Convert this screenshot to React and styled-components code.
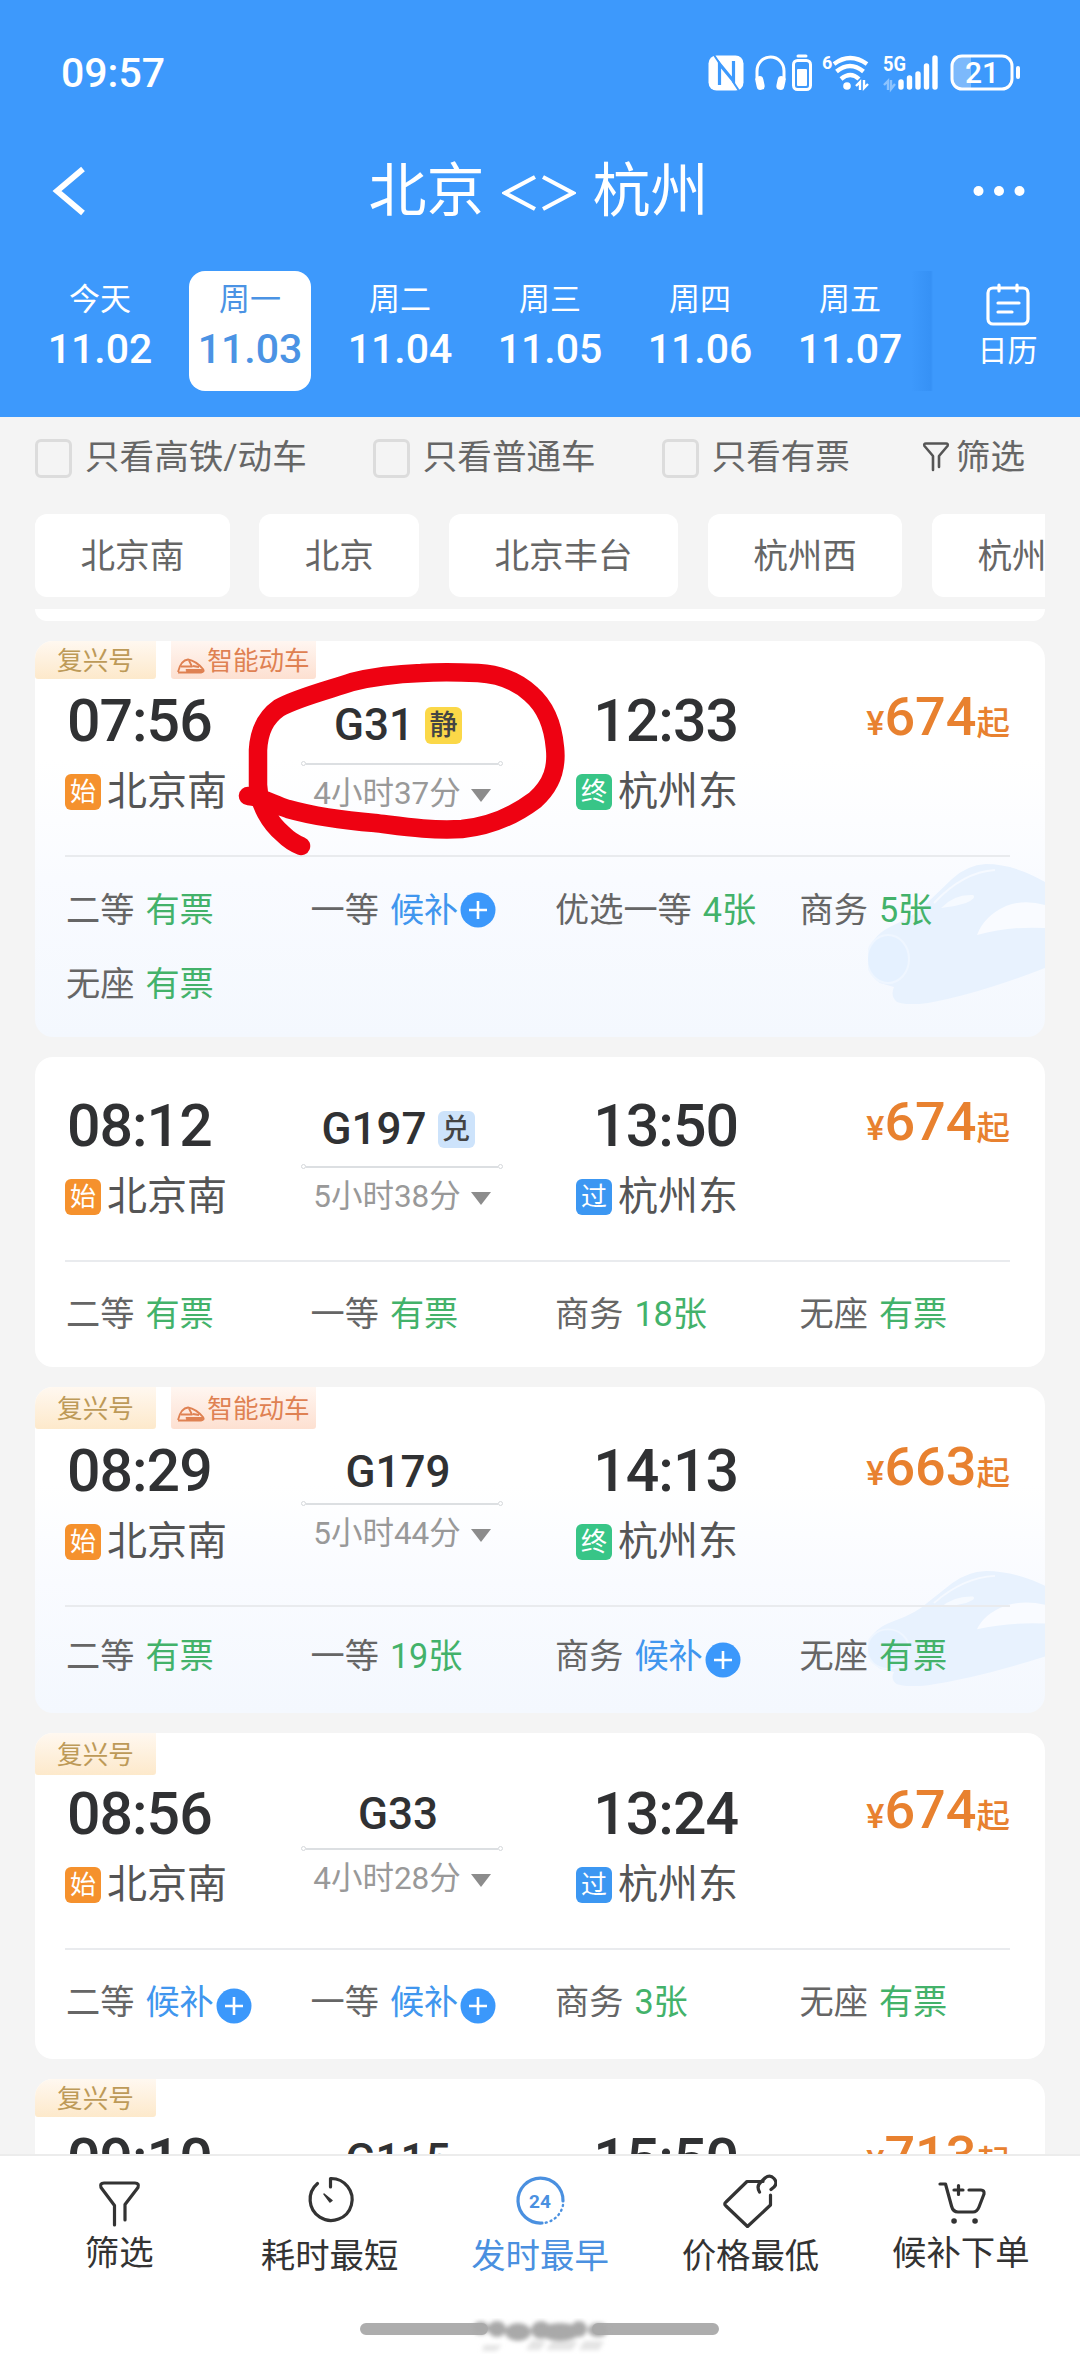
import { useState } from 'react'
import styled, { createGlobalStyle } from 'styled-components'

const days = [
   { week: '今天', date: '11.02' },
   { week: '周一', date: '11.03' },
   { week: '周二', date: '11.04' },
   { week: '周三', date: '11.05' },
   { week: '周四', date: '11.06' },
   { week: '周五', date: '11.07' },
]

const filters = ['只看高铁/动车', '只看普通车', '只看有票']

const stations = ['北京南', '北京', '北京丰台', '杭州西', '杭州东']

const tagColors = {
   始: '#f5912d',
   终: '#38c587',
   过: '#3c97f2',
}

const trains = [
   {
      no: 'G31',
      mark: { text: '静', color: '#fbd848' },
      fuxing: true,
      smart: true,
      circled: true,
      start: '07:56',
      end: '12:33',
      endTag: '终',
      duration: '4小时37分',
      price: '674',
      seats: [
         ['二等', '有票'],
         ['一等', '候补'],
         ['优选一等', '4张'],
         ['商务', '5张'],
         ['无座', '有票'],
      ],
      layout: { height: 396, top: 50, badge: 38, midTop: 12, midGap: 16, seats: 33, art: [140, 33] },
   },
   {
      no: 'G197',
      mark: { text: '兑', color: '#cde3fb' },
      start: '08:12',
      end: '13:50',
      endTag: '过',
      duration: '5小时38分',
      price: '674',
      seats: [
         ['二等', '有票'],
         ['一等', '有票'],
         ['商务', '18张'],
         ['无座', '有票'],
      ],
      layout: { height: 310, top: 39, midTop: 11, midGap: 15, seats: 32 },
   },
   {
      no: 'G179',
      fuxing: true,
      smart: true,
      start: '08:29',
      end: '14:13',
      endTag: '终',
      duration: '5小时44分',
      price: '663',
      seats: [
         ['二等', '有票'],
         ['一等', '19张'],
         ['商务', '候补'],
         ['无座', '有票'],
      ],
      layout: { height: 326, top: 54, badge: 42, midTop: 9, midGap: 9, seats: 29, plusDrop: 4, art: [115, 27] },
   },
   {
      no: 'G33',
      fuxing: true,
      start: '08:56',
      end: '13:24',
      endTag: '过',
      duration: '4小时28分',
      price: '674',
      seats: [
         ['二等', '候补'],
         ['一等', '候补'],
         ['商务', '3张'],
         ['无座', '有票'],
      ],
      layout: { height: 326, top: 51, badge: 42, midTop: 8, midGap: 12, seats: 32, plusDrop: 4 },
   },
   {
      no: 'G115',
      fuxing: true,
      start: '09:10',
      end: '15:50',
      price: '713',
      seats: [],
      layout: { height: 326, top: 51, badge: 38, midTop: 8, midGap: 12, seats: 32 },
   },
]

const StatusIcons = () => (
   <StatusRight>
      <svg width="36" height="38" viewBox="0 0 36 38" fill="none">
         <rect x="0.5" y="1.5" width="35" height="35" rx="8" fill="#fff" />
         <path d="M11.500 31V10l14 17V7" stroke="#3d99fc" strokeWidth="3.2" />
         <path d="M6 1l6 9M24.500 27l6 9" stroke="#3d99fc" strokeWidth="2" />
      </svg>
      <svg width="58" height="38" viewBox="0 0 58 38" fill="none">
         <path d="M3 26V17C3 9 9 3 16.500 3S30 9 30 17v9" stroke="#fff" strokeWidth="3" />
         <rect x="2" y="22" width="8" height="14" rx="4" fill="#fff" transform="rotate(-12 6 29)" />
         <rect x="23" y="22" width="8" height="14" rx="4" fill="#fff" transform="rotate(12 27 29)" />
         <rect x="39.500" y="6.500" width="17" height="29" rx="4" stroke="#fff" strokeWidth="3" />
         <path d="M44 2h8" stroke="#fff" strokeWidth="3" strokeLinecap="round" />
         <rect x="43" y="15" width="10" height="17" rx="1" fill="#fff" />
      </svg>
      <svg width="50" height="40" viewBox="0 0 50 40" fill="none" overflow="visible">
         <text x="0" y="16" fontSize="18" fontWeight="700" fill="#fff">6</text>
         <g stroke="#fff" strokeWidth="4.400">
            <path d="M12 11q16-12 33 0" />
            <path d="M14.500 18.500q13.500-11 27 0" />
            <path d="M19 26q9.500-8 18 0" />
         </g>
         <circle cx="25" cy="33" r="3.800" fill="#fff" />
         <path d="M34 33l4-4v8M46 31l-4 4v-8" stroke="#fff" strokeWidth="2.400" />
      </svg>
      <svg width="58" height="40" viewBox="0 0 58 40" fill="none" overflow="visible">
         <text x="1" y="18" fontSize="20" fontWeight="700" fill="#fff" textLength="23" lengthAdjust="spacingAndGlyphs">5G</text>
         <g stroke="#fff" strokeWidth="5.400" strokeLinecap="round">
            <path d="M19 34v-5M27.500 34v-9M36 34V21M44.500 34V13M53 34V5" />
         </g>
         <path d="M2 32l4-4v9M13 31l-4 5v-9" stroke="#8cc3fe" strokeWidth="2.400" />
      </svg>
      <svg width="72" height="38" viewBox="0 0 72 38" fill="none">
         <path d="M10 3h11v32H10q-7-1-7-8V11q0-7 7-8z" fill="#7cb9fb" />
         <rect x="2" y="2" width="60" height="33" rx="10" stroke="#fff" strokeWidth="3" />
         <path d="M68 14v9" stroke="#fff" strokeWidth="4" strokeLinecap="round" />
         <text x="32" y="29" fontSize="30" fontWeight="500" textAnchor="middle" fill="#fff">21</text>
      </svg>
   </StatusRight>
)

const CalendarIcon = () => (
   <svg width="44" height="44" viewBox="0 0 44 44" fill="none" stroke="#fff" strokeWidth="3.200" strokeLinecap="round">
      <rect x="2" y="5" width="40" height="36" rx="5" />
      <path d="M13 2v6M31 2v6M12 20h21M12 29h14" />
   </svg>
)

const SmallFunnel = () => (
   <svg width="28" height="32" viewBox="0 0 28 32" fill="none" stroke="#555" strokeWidth="2.600" strokeLinecap="round" strokeLinejoin="round">
      <path d="M11 29V15L2.500 5Q1.500 2.500 4 2.500h20Q26.500 2.500 25.500 5L17 15v11" />
   </svg>
)

const TrainIcon = () => (
   <svg width="28" height="16" viewBox="0 0 28 16" fill="none" stroke="#df8152" strokeWidth="1.800" strokeLinejoin="round">
      <path d="M1 14Q4 2 11 1.500Q19 3 26 11Q28 14 24 14.500H1" />
      <path d="M4 8.500h11l-3-6M16 8l6 1" />
      <path d="M9 11.500h17l-1 3h-15z" fill="#df8152" strokeWidth="1" />
   </svg>
)

const TrainArt = ({ size }) => (
   <Art width="177" height={size[0]} $bottom={size[1]} viewBox="0 0 177 140" preserveAspectRatio="none">
      <path
         d="M177 18Q146 0 118 0Q99 1 84 15L60 38Q50 50 26 61Q5 70 1 87Q-2 110 12 119L26 123Q22 132 29 138Q40 142 60 139Q110 130 177 104Z"
         fill="#e8f2fe"
      />
      <path d="M109 71Q116 52 138 42Q156 35 177 41V64Q142 62 109 71Z" fill="#f9fbff" />
      <path d="M73 44Q86 30 105 31Q109 34 98 39Q86 43 73 44Z" fill="#f6faff" />
      <path d="M66 39Q95 8 127 6" fill="none" stroke="#f5f9ff" strokeWidth="2" />
      <ellipse cx="20" cy="95" rx="21" ry="24" fill="#e5f1ff" stroke="#eff6ff" strokeWidth="2" />
   </Art>
)

const PenCircle = () => (
   <Pen width="350" height="220" viewBox="230 650 350 220" fill="none" stroke="#ee0212" strokeWidth="18.500" strokeLinecap="round" strokeLinejoin="round">
      <path d="M248 796C262 797 272 804 288 809C320 818 350 821 375 823C400 826 430 831 462 829C492 826 515 815 535 800C553 784 557 767 555 748C553 725 546 707 531 694C516 680 496 674 478 673C455 672 436 672 421 673C395 674 372 677 352 682C328 690 296 698 279 708C265 718 259 731 258 750V785C259 805 270 823 283 834Q291 842 301 846" />
   </Pen>
)

const FunnelIcon = () => (
   <svg width="54" height="54" viewBox="0 0 54 54">
      <path d="M22.500 51V31.500L9 13.500Q7.500 9 12 9H43Q47.500 9 46 13.500L33 30.500V46" />
   </svg>
)

const ClockIcon = () => (
   <svg width="54" height="54" viewBox="0 0 54 54">
      <path d="M27.500 13V4.500A21 21 0 1 1 14.500 9.500" />
      <path d="M21 20l8 6.500-2 1.500z" fill="currentColor" strokeWidth="1.500" />
   </svg>
)

const EarliestIcon = () => (
   <svg width="54" height="54" viewBox="0 0 54 54">
      <path d="M29 49A22.500 22.500 0 1 1 50 27" />
      <path d="M50 31A22.500 22.500 0 0 1 31 49" strokeDasharray="1 4" strokeWidth="2.400" />
      <text x="27" y="34" fontSize="19" fontWeight="700" textAnchor="middle" fill="currentColor" stroke="none">24</text>
   </svg>
)

const PriceIcon = () => (
   <svg width="54" height="54" viewBox="0 0 54 54">
      <path d="M40 7.500H24L3 28Q0.500 30 3 32L24.500 52.500L47.500 31V21" />
      <path d="M36.500 18Q33 12 38 8L42 4Q47 0 51 4.500Q55 9 51 13L48 15.500" />
   </svg>
)

const CartIcon = () => (
   <svg width="54" height="54" viewBox="0 0 54 54">
      <path d="M6 10h5.500l6 22Q19 38 24 38h15Q43 38 45 33L50 20Q50.500 16 47 16H35" />
      <path d="M20 16h9M24.500 11.500v9" />
      <path d="M20 47h.1M41 47h.1" strokeWidth="5.500" />
   </svg>
)

const tabs = [
   { name: '筛选', icon: <FunnelIcon /> },
   { name: '耗时最短', icon: <ClockIcon />, drop: 3 },
   { name: '发时最早', icon: <EarliestIcon />, drop: 3 },
   { name: '价格最低', icon: <PriceIcon />, drop: 3 },
   { name: '候补下单', icon: <CartIcon /> },
]

const Seat = ({ name, value, plusDrop }) => {
   const waiting = value === '候补'
   return (
      <SeatItem $plusDrop={plusDrop}>
         {name}
         <SeatValue $waiting={waiting}>{value}</SeatValue>
         {waiting && (
            <svg width="36" height="36" viewBox="0 0 36 36">
               <circle cx="18" cy="18" r="17.500" fill="#3b98fb" />
               <path d="M9 18h18M18 9v18" stroke="#fff" strokeWidth="2.600" />
            </svg>
         )}
      </SeatItem>
   )
}

const TrainCard = ({ train }) => {
   const { layout } = train
   return (
      <Card $height={layout.height} $tinted={train.smart}>
         {layout.art && <TrainArt size={layout.art} />}
         <Badges $height={layout.top}>
            {train.fuxing && <Badge $height={layout.badge}>复兴号</Badge>}
            {train.smart && (
               <SmartBadge $height={layout.badge}>
                  <TrainIcon />
                  智能动车
               </SmartBadge>
            )}
         </Badges>
         <Journey>
            <Departure>
               <Time>{train.start}</Time>
               {train.endTag && (
                  <Station>
                     <StationTag $color={tagColors['始']}>始</StationTag>
                     北京南
                  </Station>
               )}
            </Departure>
            <Middle $top={layout.midTop}>
               <TrainNo>
                  {train.no}
                  {train.mark && <Mark $color={train.mark.color}>{train.mark.text}</Mark>}
               </TrainNo>
               <Track $gap={layout.midGap} />
               {train.duration && (
                  <Duration>
                     {train.duration}
                     <Triangle />
                  </Duration>
               )}
            </Middle>
            <Arrival>
               <Time>{train.end}</Time>
               {train.endTag && (
                  <Station>
                     <StationTag $color={tagColors[train.endTag]}>{train.endTag}</StationTag>
                     杭州东
                  </Station>
               )}
            </Arrival>
            <Price>
               <small>¥</small>
               {train.price}
               <span>起</span>
            </Price>
         </Journey>
         <Seats $top={layout.seats}>
            {train.seats.map(([name, value]) => (
               <Seat key={name} name={name} value={value} plusDrop={layout.plusDrop} />
            ))}
         </Seats>
         {train.circled && <PenCircle />}
      </Card>
   )
}

export default function App() {
   const [day, setDay] = useState(1)
   const [tab, setTab] = useState(2)

   return (
      <Page>
         <GlobalStyle />
         <Header>
            <StatusBar>
               09:57
               <StatusIcons />
            </StatusBar>
            <TitleBar>
               <BackIcon width="34" height="50" viewBox="0 0 34 50" fill="none" stroke="#fff" strokeWidth="5.800">
                  <path d="M31 3L5 25l26 22" />
               </BackIcon>
               <Title>
                  北京
                  <svg width="74" height="36" viewBox="0 0 74 36" fill="none" stroke="#fff" strokeWidth="4.200">
                     <path d="M33 2L3 18l30 16M41 2l30 16L41 34" />
                  </svg>
                  杭州
               </Title>
               <svg width="52" height="12" viewBox="0 0 52 12" fill="#fff">
                  <circle cx="5.500" cy="6" r="5" />
                  <circle cx="26" cy="6" r="5" />
                  <circle cx="46.500" cy="6" r="5" />
               </svg>
            </TitleBar>
            <DateBar>
               {days.map((item, i) => (
                  <DayCell key={item.date} $active={i === day} onClick={() => setDay(i)}>
                     <Week>{item.week}</Week>
                     <DateText>{item.date}</DateText>
                  </DayCell>
               ))}
               <Calendar>
                  <CalendarIcon />
                  日历
               </Calendar>
            </DateBar>
         </Header>
         <FilterRow>
            {filters.map((name) => (
               <FilterItem key={name}>
                  <Box />
                  {name}
               </FilterItem>
            ))}
            <FilterMore>
               <SmallFunnel />
               筛选
            </FilterMore>
         </FilterRow>
         <Chips>
            {stations.map((name) => (
               <Chip key={name}>{name}</Chip>
            ))}
         </Chips>
         <List>
            <CardTail />
            {trains.map((train) => (
               <TrainCard key={train.no} train={train} />
            ))}
         </List>
         <BottomBar>
            <Tabs>
               {tabs.map((item, i) => (
                  <Tab key={item.name} $active={i === tab} onClick={() => setTab(i)}>
                     {item.icon}
                     <TabName $drop={item.drop}>{item.name}</TabName>
                  </Tab>
               ))}
            </Tabs>
            <HomeIndicator width="360" height="44" viewBox="360 2312 360 44">
               <defs>
                  <filter id="soft">
                     <feGaussianBlur stdDeviation="2" />
                  </filter>
               </defs>
               <path d="M366 2329H482M598 2329H713" stroke="#adadad" strokeWidth="12" strokeLinecap="round" />
               <g filter="url(#soft)">
                  <path d="M484 2345h18l-6 6h-14zM532 2340l14 1-6 9h-14zM552 2341h26l-6 9h-26zM584 2341h20l-5 9h-20z" fill="#e4e4e4" />
                  <g fill="#a9a9a9">
                     <ellipse cx="481" cy="2328" rx="8" ry="6.500" />
                     <ellipse cx="497" cy="2329" rx="9" ry="8" />
                     <ellipse cx="518" cy="2332" rx="13" ry="9" />
                     <ellipse cx="541" cy="2330" rx="10" ry="9" />
                     <ellipse cx="560" cy="2332" rx="20" ry="9" />
                     <ellipse cx="579" cy="2329" rx="8" ry="8" />
                     <ellipse cx="598" cy="2330" rx="10" ry="7" />
                  </g>
               </g>
            </HomeIndicator>
         </BottomBar>
      </Page>
   )
}

const Page = styled.div`
   display: flex;
   flex-direction: column;
   width: 1080px;
   height: 2362px;
   overflow: hidden;
   background: #f4f4f4;
`
const Header = styled.header`
   display: flex;
   flex-direction: column;
   flex: none;
   height: 417px;
   color: #fff;
   background: #3d99fc;
`
const StatusBar = styled.div`
   display: flex;
   align-items: center;
   justify-content: space-between;
   height: 50px;
   padding: 48px 58px 0 61px;
   font-size: 41px;
   font-weight: 500;
`
const StatusRight = styled.div`
   display: flex;
   align-items: center;
   gap: 10px;
`
const TitleBar = styled.div`
   display: flex;
   align-items: center;
   justify-content: space-between;
   height: 80px;
   margin-top: 53px;
   padding: 0 55px 0 52px;
`
const BackIcon = styled.svg`
   margin-right: 18px;
`
const Title = styled.h1`
   display: flex;
   align-items: center;
   gap: 17px;
   margin: 0;
   font-size: 58px;
   font-weight: 400;
   line-height: 82px;

   svg {
      margin-top: 4px;
   }
`
const DateBar = styled.div`
   display: flex;
   margin-top: 40px;
   padding-left: 39px;
`
const DayCell = styled.div`
   display: flex;
   flex-direction: column;
   align-items: center;
   flex: none;
   width: 122px;
   height: 120px;
   margin-right: 28px;
   border-radius: 16px;
   color: ${({ $active }) => ($active ? '#4b93e4' : '#fff')};
   background: ${({ $active }) => ($active ? '#fff' : 'none')};
`
const Week = styled.span`
   margin-top: 9px;
   font-size: 31px;
   line-height: 40px;
`
const DateText = styled.span`
   margin-top: 8px;
   font-size: 41px;
   font-weight: 500;
   line-height: 42px;
`
/* the soft edge on the left sits over the last day */
const Calendar = styled.div`
   display: flex;
   flex-direction: column;
   align-items: center;
   flex: 1;
   margin-left: -28px;
   padding: 12px 0 0 24px;
   font-size: 30px;
   line-height: 47px;
   background: linear-gradient(to right, transparent, #3691f5 20px, #3d99fc 22px);
`
const FilterRow = styled.div`
   display: flex;
   align-items: center;
   gap: 66px;
   flex: none;
   height: 84px;
   padding: 0 55px 0 35px;
   font-size: 34.600px;
   line-height: 40px;
   color: #666;
`
const FilterItem = styled.label`
   display: flex;
   align-items: center;
   gap: 13px;
   margin-top: -5px;
`
const Box = styled.span`
   width: 31px;
   height: 33px;
   margin-top: 4px;
   border: 3px solid #dcdcdc;
   border-radius: 6px;
`
const FilterMore = styled(FilterItem)`
   gap: 6px;
   margin-left: auto;
`
const Chips = styled.div`
   display: flex;
   gap: 29.500px;
   flex: none;
   width: 1010px;
   margin: 13px 0 12px 35px;
   overflow: hidden;
`
const Chip = styled.div`
   flex: none;
   height: 83px;
   padding: 0 45.500px;
   border-radius: 12px;
   font-size: 34.600px;
   line-height: 85px;
   color: #666;
   background: #fff;
`
const List = styled.main`
   display: flex;
   flex-direction: column;
   gap: 20px;
   flex: none;
   width: 1010px;
   height: 1545px;
   margin-left: 35px;
   overflow: hidden;
`
const CardTail = styled.div`
   flex: none;
   height: 12px;
   border-radius: 0 0 16px 16px;
   background: #fff;
`
const Card = styled.section`
   position: relative;
   flex: none;
   height: ${({ $height }) => $height}px;
   border-radius: 18px;
   overflow: hidden;
   background: ${({ $tinted }) => ($tinted ? 'linear-gradient(#fff 30%, #f9fbff 60%, #f4f8fe)' : '#fff')};
`
const Art = styled.svg`
   position: absolute;
   right: 0;
   bottom: ${({ $bottom }) => $bottom}px;
`
const Pen = styled.svg`
   position: absolute;
   left: 195px;
   top: 9px;
`
const Badges = styled.div`
   display: flex;
   gap: 15px;
   height: ${({ $height }) => $height}px;
`
const Badge = styled.span`
   display: flex;
   align-items: center;
   justify-content: center;
   box-sizing: border-box;
   width: 121px;
   height: ${({ $height }) => $height}px;
   padding-bottom: 3px;
   border-radius: 0 0 3px 3px;
   font-size: 25.600px;
   color: #bd9a58;
   background: linear-gradient(#fff8f0, #fde9cb);
`
const SmartBadge = styled(Badge)`
   gap: 2px;
   width: 145px;
   color: #df8152;
   background: linear-gradient(#fff6f1, #fde0d1);

   svg {
      margin-top: 14px;
   }
`
const Journey = styled.div`
   position: relative;
   display: flex;
   align-items: flex-start;
   height: 164px;
   margin: 0 35px 0 30px;
   border-bottom: 2px solid #e9ebee;
`
const Departure = styled.div`
   width: 237px;
`
const Time = styled.div`
   padding: 0 1px 0 2px;
   font-size: 59px;
   font-weight: 500;
   line-height: 60px;
   letter-spacing: -1px;
   color: #303133;
`
const Station = styled.div`
   display: flex;
   align-items: center;
   gap: 6px;
   height: 36px;
   margin-top: 23px;
   font-size: 40px;
   line-height: 38px;
   color: #555;
   white-space: nowrap;
`
const StationTag = styled.span`
   width: 36px;
   height: 36px;
   border-radius: 6px;
   font-size: 26px;
   line-height: 37px;
   text-align: center;
   color: #fff;
   background: ${({ $color }) => $color};
`
const Middle = styled.div`
   width: 200px;
   padding-top: ${({ $top }) => $top}px;
`
const TrainNo = styled.div`
   display: flex;
   align-items: center;
   justify-content: center;
   gap: 11px;
   height: 44px;
   padding-right: 8px;
   font-size: 44px;
   font-weight: 500;
   line-height: 44px;
   color: #303133;
`
const Mark = styled.span`
   width: 37px;
   height: 37px;
   border-radius: 6px;
   font-size: 28px;
   line-height: 38px;
   text-align: center;
   color: #444;
   background: ${({ $color }) => $color};
`
const Track = styled.div`
   position: relative;
   height: 2px;
   margin: ${({ $gap }) => $gap}px 4px 0;
   background: #dcdfe2;

   &::before,
   &::after {
      content: '';
      position: absolute;
      top: -2px;
      left: -5px;
      width: 3px;
      height: 3px;
      border: 1.500px solid #d5d8db;
      border-radius: 50%;
   }
   &::after {
      left: auto;
      right: -5px;
   }
`
const Duration = styled.div`
   display: flex;
   align-items: center;
   justify-content: center;
   gap: 10px;
   margin-top: 13px;
   font-size: 31.500px;
   line-height: 32px;
   color: #999;
`
const Triangle = styled.i`
   margin-top: 3px;
   border: 10px solid transparent;
   border-top: 13px solid #8c8c8c;
   border-bottom: 0;
`
const Arrival = styled.div`
   width: 163px;
   margin-left: 74px;

   ${Time} {
      text-align: right;
   }
`
const Price = styled.div`
   display: flex;
   align-items: baseline;
   margin: -4px 0 0 auto;
   font-size: 54px;
   font-weight: 500;
   line-height: 60px;
   color: #e8812f;

   small {
      font-size: 34px;
   }
   span {
      font-size: 33.500px;
   }
`
const Seats = styled.div`
   position: relative;
   display: grid;
   grid-template-columns: repeat(4, 244.500px);
   row-gap: 33.500px;
   margin-left: 31px;
   padding-top: ${({ $top }) => $top}px;
`
const SeatItem = styled.div`
   display: flex;
   align-items: center;
   height: 40px;
   font-size: 34.200px;
   line-height: 40px;
   color: #666;

   svg {
      margin: ${({ $plusDrop = 0 }) => $plusDrop * 2}px 0 0 2px;
   }
`
const SeatValue = styled.span`
   margin-left: 11px;
   color: ${({ $waiting }) => ($waiting ? '#4096ee' : '#43b26a')};
`
const BottomBar = styled.footer`
   display: flex;
   flex-direction: column;
   align-items: center;
   flex: none;
   height: 206px;
   border-top: 2px solid #ececec;
   background: #fff;
`
const Tabs = styled.nav`
   display: flex;
   width: 1052px;
   height: 156px;
`
const Tab = styled.div`
   display: flex;
   flex-direction: column;
   align-items: center;
   flex: 1;
   padding-top: 18px;
   color: ${({ $active }) => ($active ? '#4a90e0' : '#333')};

   svg {
      fill: none;
      stroke: currentColor;
      stroke-width: 3.200;
      stroke-linecap: round;
      stroke-linejoin: round;
   }
`
const TabName = styled.span`
   margin-top: ${({ $drop = 0 }) => $drop + 4}px;
   font-size: 34.400px;
   line-height: 42px;
`
const HomeIndicator = styled.svg`
   flex: none;
`
const GlobalStyle = createGlobalStyle`
   body {
      margin: 0;
      font-family: Roboto, 'Noto Sans CJK SC', sans-serif;
   }
   svg {
      display: block;
      flex: none;
   }
`
